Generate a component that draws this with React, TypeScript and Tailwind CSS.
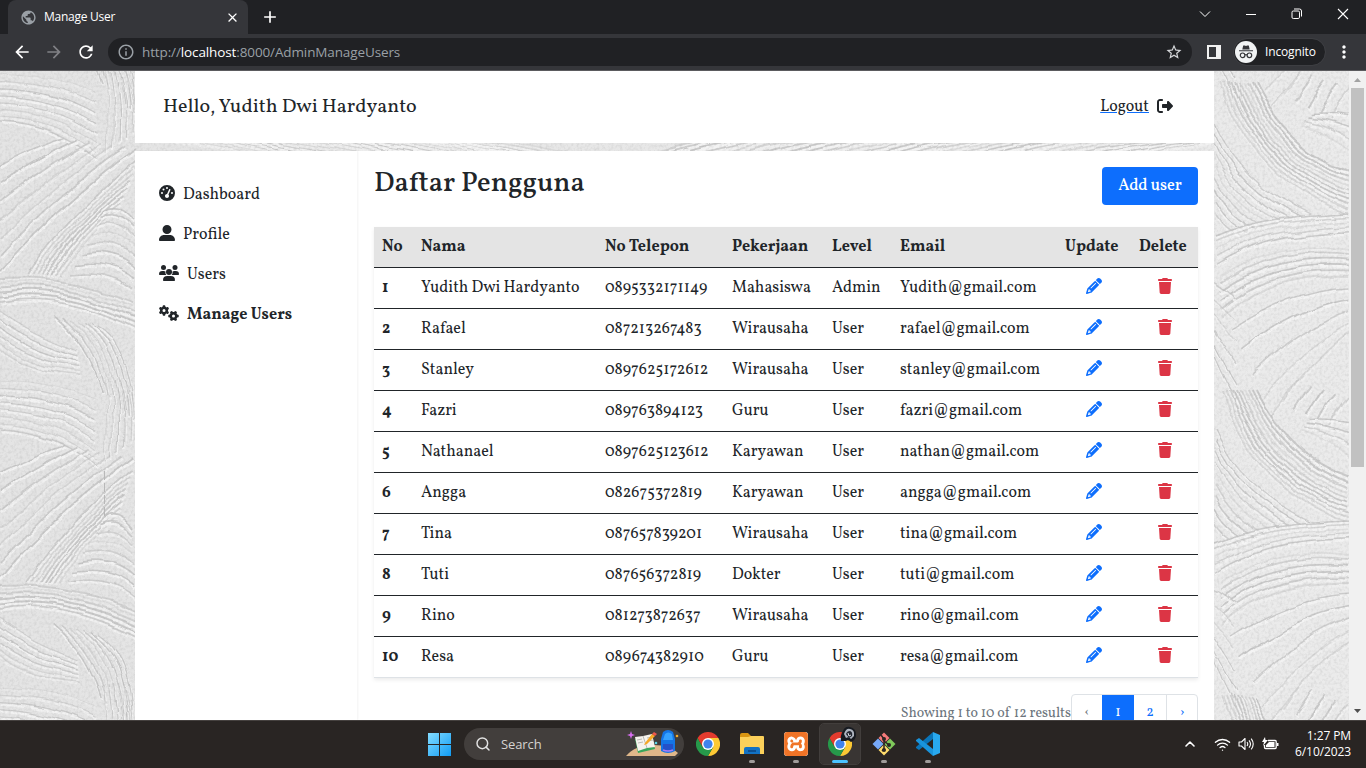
import React from "react";
import { FaGaugeHigh, FaUserLarge, FaGears, FaRightFromBracket, FaPencil, FaTrash } from "react-icons/fa6";
import { SiXampp } from "react-icons/si";
import { MdPublic, MdArrowBack, MdArrowForward, MdRefresh, MdInfoOutline, MdStarBorder, MdClose, MdAdd, MdMoreVert } from "react-icons/md";
import { ChevronUp, Wifi, Search } from "lucide-react";

const serif = "font-['Vollkorn','Liberation_Serif',serif]";
const ui = "font-['Segoe_UI','Open_Sans',sans-serif]";

type Pt = [number, number];
type Fan = { a: [Pt, Pt, Pt]; b: [Pt, Pt, Pt]; n: number };

const fans: Fan[] = [
  { a: [[0, 3], [55, 5], [94, 22]], b: [[0, 50], [55, 52], [98, 88]], n: 8 },
  { a: [[0, 90], [40, 72], [62, 66]], b: [[0, 200], [60, 130], [135, 78]], n: 7 },
  { a: [[25, 205], [60, 150], [135, 88]], b: [[62, 205], [85, 165], [118, 140]], n: 8 },
  { a: [[104, 0], [108, 30], [106, 82]], b: [[126, 0], [137, 30], [134, 60]], n: 5 },
  { a: [[104, 140], [120, 130], [135, 150]], b: [[70, 203], [110, 198], [135, 218]], n: 8 },
  { a: [[0, 209], [70, 205], [135, 232]], b: [[0, 232], [60, 220], [135, 258]], n: 6 },
  { a: [[0, 240], [30, 262], [78, 280]], b: [[0, 278], [20, 300], [80, 304]], n: 6 },
  { a: [[52, 245], [88, 275], [100, 320]], b: [[98, 255], [132, 275], [134, 350]], n: 7 },
  { a: [[1220, 12], [1250, 110], [1349, 146]], b: [[1256, 12], [1290, 80], [1349, 98]], n: 10 },
  { a: [[1214, 50], [1240, 110], [1310, 144]], b: [[1214, 146], [1222, 160], [1236, 166]], n: 9 },
  { a: [[1214, 166], [1260, 146], [1349, 143]], b: [[1214, 196], [1260, 164], [1349, 162]], n: 5 },
  { a: [[1220, 204], [1280, 168], [1349, 178]], b: [[1222, 246], [1270, 202], [1349, 205]], n: 6 },
  { a: [[1232, 258], [1290, 220], [1349, 216]], b: [[1270, 345], [1310, 290], [1349, 262]], n: 5 },
  { a: [[1214, 208], [1222, 212], [1236, 222]], b: [[1214, 285], [1220, 300], [1236, 330]], n: 6 },
  { a: [[1280, 22], [1290, 8], [1296, 0]], b: [[1330, 48], [1340, 28], [1349, 18]], n: 5 },
  { a: [[1310, 42], [1330, 40], [1349, 43]], b: [[1300, 54], [1325, 62], [1349, 80]], n: 4 },
  { a: [[135, 60], [240, 80], [300, 92]], b: [[430, 60], [530, 70], [620, 95]], n: 18 },
  { a: [[620, 90], [670, 70], [760, 60]], b: [[1110, 90], [1150, 76], [1214, 70]], n: 26 },
];

const lines: { d: string; w: number; o: number }[] = [];
[-307, 0, 307, 614].forEach((dy) => {
  fans.forEach((f, fi) => {
    for (let i = 0; i < f.n; i++) {
      const j = Math.sin(i * 12.9 + fi * 7.3) * 0.28;
      const t = Math.min(1, Math.max(0, (i + j) / (f.n - 1)));
      const p = f.a.map((q, k) => [q[0] + (f.b[k][0] - q[0]) * t, q[1] + (f.b[k][1] - q[1]) * t + dy]);
      lines.push({
        d: `M${p[0][0].toFixed(1)} ${p[0][1].toFixed(1)}Q${p[1][0].toFixed(1)} ${p[1][1].toFixed(1)} ${p[2][0].toFixed(1)} ${p[2][1].toFixed(1)}`,
        w: 1 + Math.abs(Math.sin(i * 3.1 + fi)) * 0.9,
        o: 0.3 + Math.abs(Math.sin(i * 5.7 + fi * 2)) * 0.55,
      });
    }
  });
});

function Plaster() {
  return (
    <svg className="absolute inset-0" width="1349" height="649" viewBox="0 0 1349 649">
      <defs>
        <filter id="rough" x="0" y="0" width="1349" height="649" filterUnits="userSpaceOnUse" colorInterpolationFilters="sRGB">
          <feTurbulence type="fractalNoise" baseFrequency="0.02" numOctaves="3" seed="4" result="n" />
          <feDisplacementMap in="SourceGraphic" in2="n" scale="10" xChannelSelector="R" yChannelSelector="G" />
        </filter>
        <filter id="grain" x="0" y="0" width="1349" height="649" filterUnits="userSpaceOnUse" colorInterpolationFilters="sRGB">
          <feTurbulence type="fractalNoise" baseFrequency="0.35" numOctaves="2" seed="9" />
          <feColorMatrix values="0 0 0 0 0.5  0 0 0 0 0.5  0 0 0 0 0.5  0.35 0 0 0 -0.15" />
        </filter>
        <linearGradient id="base" x1="0" x2="1" y1="0" y2="0">
          <stop offset="0" stopColor="#e4e4e4" />
          <stop offset="1" stopColor="#ebebeb" />
        </linearGradient>
      </defs>
      <rect width="1349" height="649" fill="url(#base)" />
      <g filter="url(#rough)" fill="none">
        {lines.map((l, i) => (
          <g key={i} opacity={l.o}>
            <path d={l.d} stroke="#f6f6f6" strokeWidth={l.w + 1.2} transform="translate(0.6 2.2)" />
            <path d={l.d} stroke="#c4c4c4" strokeWidth={l.w} />
          </g>
        ))}
      </g>
      <rect width="1349" height="649" filter="url(#grain)" />
      <path d="M104.5 400v45" stroke="#b8b8b8" strokeDasharray="9 3" />
    </svg>
  );
}

function ChromeLogo() {
  return (
    <svg width="24" height="24" viewBox="0 0 24 24">
      <path d="M12 6h10.4A12 12 0 0 1 12 24l5.2-9Z" fill="#fcc934" />
      <path d="M6.8 15 1.6 6A12 12 0 0 0 12 24l5.2-9Z" fill="#26994a" />
      <path d="M12 6h10.4A12 12 0 0 0 1.6 6l5.2 9Z" fill="#e33b2e" />
      <circle cx="12" cy="12" r="6" fill="#fff" />
      <circle cx="12" cy="12" r="4.6" fill="#3f83ee" />
    </svg>
  );
}

function UsersIcon() {
  return (
    <svg width="20" height="16" viewBox="0 0 20 16" fill="currentColor">
      <circle cx="4.5" cy="2.5" r="2.5" /><circle cx="16" cy="2.5" r="2.5" /><circle cx="10" cy="7" r="3" />
      <path d="M0 9.3Q0 6 3.3 6h1.6q1 0 1.6.4Q6 8.400 7.300 10H.7q-.7 0-.7-.7zM20 9.300Q20 6 16.700 6h-1.600q-1 0-1.600.4.500 2-.8 3.600h6.600q.7 0 .7-.7z" />
      <path d="M4 15.200Q4 11 8.200 11h3.600q4.200 0 4.200 4.200 0 .8-.8.8H4.800q-.8 0-.8-.8z" />
    </svg>
  );
}

function Dot() {
  return <span className="absolute bottom-[-7px] left-[9px] h-[3px] w-[6px] rounded-full bg-[#a09c9a]" />;
}

const people = [
  ["Yudith Dwi Hardyanto", "0895332171149", "Mahasiswa", "Admin", "Yudith@gmail.com"],
  ["Rafael", "087213267483", "Wirausaha", "User", "rafael@gmail.com"],
  ["Stanley", "0897625172612", "Wirausaha", "User", "stanley@gmail.com"],
  ["Fazri", "089763894123", "Guru", "User", "fazri@gmail.com"],
  ["Nathanael", "0897625123612", "Karyawan", "User", "nathan@gmail.com"],
  ["Angga", "082675372819", "Karyawan", "User", "angga@gmail.com"],
  ["Tina", "087657839201", "Wirausaha", "User", "tina@gmail.com"],
  ["Tuti", "087656372819", "Dokter", "User", "tuti@gmail.com"],
  ["Rino", "081273872637", "Wirausaha", "User", "rino@gmail.com"],
  ["Resa", "089674382910", "Guru", "User", "resa@gmail.com"],
];

function Browser() {
  return (
    <header className={`${ui} h-[71px] shrink-0 border-b border-[#5b5b5e] bg-[#35363a] text-white`}>
      <div className="flex h-[34px] bg-[#202124] pl-2">
        <div className="flex h-[34px] w-[240px] items-center rounded-t-lg bg-[#35363a] pl-3 pr-2">
          <MdPublic className="size-[17px] text-[#9aa0a6]" />
          <span className="ml-[7px] flex-1 text-[12px] tracking-[-0.25px]">Manage User</span>
          <MdClose className="size-[15px]" />
        </div>
        <MdAdd className="ml-[12px] mt-[7px] size-5" />
        <div className="ml-auto flex items-start pt-[8px]">
          <svg width="12" height="12" viewBox="0 0 12 12" className="mr-[35px]" fill="none" stroke="#fff"><path d="m1 3.5 5 5 5-5" /></svg>
          <svg width="11" height="13" viewBox="0 0 11 13" className="mr-[34px]"><path d="M0 6.5h10" stroke="#fff" /></svg>
          <svg width="12" height="12" viewBox="0 0 12 12" className="mr-[34px]" fill="none" stroke="#fff">
            <rect x="1" y="3" width="7.5" height="7.5" rx="1.3" /><path d="M3 1h5.5a2 2 0 0 1 2 2v5.5" />
          </svg>
          <svg width="12" height="12" viewBox="0 0 12 12" className="mr-[17px]" stroke="#fff" strokeWidth="1.1"><path d="m1 1 10 10M11 1 1 11" /></svg>
        </div>
      </div>
      <div className="flex h-9 items-center pl-[12px]">
        <MdArrowBack className="size-5" />
        <MdArrowForward className="ml-[12px] size-5 text-[#808185]" />
        <MdRefresh className="ml-[12px] size-5" />
        <div className="ml-[12px] flex h-7 w-[1084px] items-center rounded-full bg-[#202124] pl-[9px] pr-[9px]">
          <MdInfoOutline className="size-[18px] text-[#9aa0a6]" />
          <span className="ml-[7px] flex-1 text-[13.5px] tracking-[-0.12px] text-[#9aa0a6]">http://<span className="text-white">localhost</span>:8000/AdminManageUsers</span>
          <MdStarBorder className="size-[18px] text-[#d5d7da]" />
        </div>
        <svg width="14" height="14" viewBox="0 0 14 14" className="ml-[15px]"><path fillRule="evenodd" fill="#f1f1f1" d="M0 0h14v14H0zM2 2v10h7V2z" /></svg>
        <div className="ml-[13px] flex h-[26px] w-[91px] items-center rounded-full bg-[#202124] pl-[1px] outline outline-1 outline-[#3d3e42]">
          <svg width="22" height="22" viewBox="0 0 22 22">
            <circle cx="11" cy="11" r="11" fill="#f1f3f4" />
            <path d="M7.3 8.5 8.2 4.5h1.6l1.2.5 1.2-.5h1.6l.9 4zM4 9.3h14v1H4z" fill="#35363a" />
            <g fill="none" stroke="#35363a" strokeWidth="1.2"><circle cx="7.6" cy="14.3" r="2.3" /><circle cx="14.4" cy="14.3" r="2.3" /><path d="M9.9 14q1.1-.8 2.2 0" /></g>
          </svg>
          <span className="ml-2 text-[12px] tracking-[-0.15px]">Incognito</span>
        </div>
        <MdMoreVert className="ml-[9px] size-5" />
      </div>
    </header>
  );
}

const menu = [
  { icon: <FaGaugeHigh className="size-4" />, label: "Dashboard", cls: "" },
  { icon: <FaUserLarge className="size-4" />, label: "Profile", cls: "" },
  { icon: <UsersIcon />, label: "Users", cls: "" },
  { icon: <FaGears className="h-4 w-5" />, label: "Manage Users", cls: "font-bold" },
];

function Page() {
  return (
    <div className={`${serif} relative flex h-[649px] overflow-hidden text-[16px] text-[#212529]`}>
      <Plaster />
      <div className="relative ml-[135px] flex w-[1079px] flex-col">
        <div className="flex h-[72px] shrink-0 items-center bg-white pl-[28px] pr-[41px]">
          <h1 className="flex-1 text-[20px]">Hello, Yudith Dwi Hardyanto</h1>
          <a className="underline decoration-[#0d6efd]">Logout</a>
          <FaRightFromBracket className="mb-[2px] ml-2 size-4" />
        </div>
        <div className="mt-2 flex h-[569px] bg-white">
          <nav className="flex w-[222px] flex-col pl-6 pt-[22px] shadow-[1px_0_2px_rgba(0,0,0,0.05)]">
            {menu.map((m) => (
              <div key={m.label} className="flex h-10 items-center gap-2">
                {m.icon}
                <span className={`pt-1 ${m.cls}`}>{m.label}</span>
              </div>
            ))}
          </nav>
          <main className="w-[857px] pl-[17px] pr-4">
            <div className="flex h-[76px] justify-between pt-4">
              <h2 className="text-[28px] font-medium leading-[34px]">Daftar Pengguna</h2>
              <button className="h-[38px] w-[96px] rounded bg-[#0d6efd] font-medium text-white">Add user</button>
            </div>
            <table className="w-[824px] table-fixed border-separate border-spacing-0 text-left shadow-[0_2px_4px_rgba(0,0,0,0.08)]">
              <colgroup>
                <col className="w-[39px]" /><col className="w-[184px]" /><col className="w-[127px]" /><col className="w-[100px]" />
                <col className="w-[68px]" /><col className="w-[165px]" /><col className="w-[74px]" /><col className="w-[67px]" />
              </colgroup>
              <thead>
                <tr className="h-[41px] bg-[#e4e4e4]">
                  {["No", "Nama", "No Telepon", "Pekerjaan", "Level", "Email", "Update", "Delete"].map((h) => (
                    <th key={h} className="whitespace-nowrap border-b border-[#212529] p-0 pl-2 font-bold leading-6">{h}</th>
                  ))}
                </tr>
              </thead>
              <tbody>
                {people.map((p, i) => (
                  <tr key={p[4]} className="h-[41px] *:border-b *:border-[#212529] last:*:border-[#dee2e6]">
                    <th className="p-0 pl-2 leading-6">{i + 1}</th>
                    <td className="whitespace-nowrap p-0 pl-2">{p[0]}</td>
                    <td className="whitespace-nowrap p-0 pl-2">{p[1]}</td>
                    <td className="whitespace-nowrap p-0 pl-2">{p[2]}</td>
                    <td className="whitespace-nowrap p-0 pl-2">{p[3]}</td>
                    <td className="whitespace-nowrap p-0 pl-2">{p[4]}</td>
                    <td className="p-0 pb-1 text-[#0d6efd]"><FaPencil className="mx-auto size-4" /></td>
                    <td className="p-0 pb-1 text-[#dc3545]"><FaTrash className="mx-auto size-4" /></td>
                  </tr>
                ))}
              </tbody>
            </table>
            <div className="mt-4 flex h-[38px] items-center justify-end text-[14px]">
              <span className="whitespace-nowrap text-[#6c757d]">Showing 1 to 10 of 12 results</span>
              <div className="flex h-[38px] w-[127px] overflow-hidden rounded border border-[#dee2e6] text-center leading-[36px] text-[#0d6efd]">
                <span className="w-[30px] text-[#6c757d]">‹</span>
                <span className="-mt-px h-[38px] w-8 bg-[#0d6efd] pt-px text-white">1</span>
                <span className="w-[33px] border-r border-[#dee2e6]">2</span>
                <span className="flex-1">›</span>
              </div>
            </div>
          </main>
        </div>
      </div>
      <div className="relative ml-auto flex w-[17px] flex-col items-center bg-[#f1f1f1]">
        <svg width="17" height="17" viewBox="0 0 17 17"><path d="m5 11 3.5-4 3.5 4z" fill="#a3a3a3" /></svg>
        <div className="h-[379px] w-[13px] bg-[#c1c1c1]" />
        <svg width="17" height="17" viewBox="0 0 17 17" className="mt-auto"><path d="m5 6 3.5 4L12 6z" fill="#505050" /></svg>
      </div>
    </div>
  );
}

function Taskbar() {
  return (
    <footer className={`${ui} flex h-12 items-center border-t border-[#45413f] bg-[#292523] pb-px pl-[428px] text-white`}>
      <svg width="23" height="23" viewBox="0 0 23 23">
        <defs><linearGradient id="win" x1="0" y1="0" x2="1" y2="1"><stop stopColor="#83dcff" /><stop offset="1" stopColor="#109cf4" /></linearGradient></defs>
        <path d="M0 0h11v11H0zM12 0h11v11H12zM0 12h11v11H0zM12 12h11v11H12z" fill="url(#win)" />
      </svg>
      <div className="ml-[13px] flex h-8 w-[220px] items-center rounded-full bg-[#423e3c] pl-[11px]">
        <Search className="size-4 text-[#e2e2e2]" strokeWidth={2.2} />
        <span className="ml-[10px] flex-1 pt-px text-[13px] tracking-[-0.1px] text-[#d6d3d1]">Search</span>
        <svg width="54" height="28" viewBox="0 0 54 28" className="mr-[4px]">
          <path d="M0 26q9-11 28-11 15 0 24 8l-3 3z" fill="#dfb78a" />
          <path d="m9 9 17-3 3 13-17 4z" fill="#39a75b" />
          <path d="m9 7 8-1 9-2 3 13-8 1-9 3z" fill="#f6f3ee" />
          <path d="m17 6 4 12M11 10l5-1m-4 4 5-1m4-4 5-1m-4 4 5-1" stroke="#b4b4b0" strokeWidth=".9" />
          <path d="m19 13 7-9 3 2-8 8-3 1z" fill="#f6a928" /><path d="m26 4 2-2 3 2-2 2z" fill="#ee574c" />
          <path d="M37 2q5-4 10 0l2 7v12q-7 4-14 0V9z" fill="#1475e6" />
          <path d="M39 4q3-3 7 0l1 6H37z" fill="#35a1ff" /><path d="M37 14h10v7H37z" fill="#2451c8" />
          <path d="M37 20q5 2 10 0" stroke="#a97cf4" strokeWidth="1.5" fill="none" />
          <path d="m5 1 1 3 3 1-3 1-1 3-1-3-3-1 3-1z" fill="#d86df0" />
          <circle cx="51" cy="6" r="1.3" fill="#f5ac29" /><circle cx="30" cy="13" r="1.3" fill="#5dd5e5" />
        </svg>
      </div>
      <div className="ml-[12px] size-6"><ChromeLogo /></div>
      <div className="relative ml-5 size-6">
        <svg width="24" height="24" viewBox="0 0 24 24">
          <path d="M0 3q0-2 2-2h6l3 3v4H0z" fill="#d89512" /><path d="M0 5h8l3-1h12q1 0 1 1v17H0z" fill="#fbd05a" />
          <path d="M4 22v-5q0-2 2-2h12q2 0 2 2v5z" fill="#1272c4" /><path d="M8 18h8v2H8z" fill="#0c4f91" />
        </svg>
        <Dot />
      </div>
      <div className="relative ml-5 size-6">
        <div className="size-6 overflow-hidden rounded-[3px] bg-white"><SiXampp className="size-6 text-[#f07427]" /></div>
        <Dot />
      </div>
      <div className="ml-[12px] flex h-10 w-[40px] items-center justify-center rounded bg-[#393533] outline outline-1 outline-[#423e3c]">
        <div className="relative size-6">
          <ChromeLogo />
          <svg width="17" height="17" viewBox="0 0 17 17" className="absolute left-[12px] top-[-6px]">
            <path d="M1 15Q0 9 3 5q2-5 7-4 6 1 6 8 0 5-5 7-3-3-5-1z" fill="#171a20" />
            <path d="M4 8q2-6 6-5 5 1 4 7l-3 3q-2-3-5-1z" fill="#aeb5c0" /><path d="M6 8q1-3 4-3 3 1 2 5l-3 2z" fill="#222630" />
            <path d="m8 7 1 3 2-1" stroke="#d9dde4" fill="none" />
          </svg>
          <span className="absolute bottom-[-7px] left-[4px] h-[3px] w-4 rounded-full bg-[#4cc2ff]" />
        </div>
      </div>
      <div className="relative ml-[12px] size-6">
        <svg width="24" height="24" viewBox="0 0 24 24">
          <path d="m12 .5 5.500 5.500-5.500 5.500L6.500 6z" fill="#f47a7a" /><path d="m18 6.500 5.500 5.500-5.500 5.500-5.500-5.500z" fill="#7fc95b" />
          <path d="m12 12.500 5.500 5.500-5.500 5.500L6.500 18z" fill="#ffdc6b" /><path d="m6 6.500 5.500 5.500L6 17.500.500 12z" fill="#77a9f8" />
          <path d="M9 3l3 4v12M12 9l5 4M12 17l-2 2" stroke="#2b2523" strokeWidth="1.5" fill="none" />
          <circle cx="12" cy="7" r="2" fill="#2b2523" /><circle cx="17" cy="13" r="2" fill="#2b2523" /><circle cx="12" cy="18" r="2" fill="#2b2523" />
        </svg>
        <Dot />
      </div>
      <div className="relative ml-5 size-6">
        <svg width="24" height="24" viewBox="0 0 24 24">
          <path d="M17 0v7L3 18l-3-2v-1z" fill="#0a75b9" /><path d="M17 24v-7L3 6 0 8v1z" fill="#1994dc" />
          <path d="m17 0 7 3v18l-7 3z" fill="#28a9ef" />
        </svg>
        <Dot />
      </div>
      <div className="ml-auto flex items-center">
        <ChevronUp className="size-[16px]" strokeWidth={2.4} />
        <Wifi className="ml-[16px] size-[17px]" strokeWidth={1.9} />
        <svg width="17" height="14" viewBox="0 0 17 14" className="ml-[7px]" fill="none" stroke="#fff" strokeWidth="1.1" strokeLinejoin="round">
          <path d="M1 5h2.5L7 1.5v11L3.500 9H1zM9 5q1.500 2 0 4M11 3.300q3 3.700 0 7.400M13.200 1.600q4 5.400 0 10.800" />
        </svg>
        <svg width="17" height="14" viewBox="0 0 17 14" className="ml-[7px]">
          <path d="M6 3.500h7.200q1 0 1 1v6q0 1-1 1H3.500q-1 0-1-1V8" fill="none" stroke="#fff" strokeWidth="1.3" />
          <path d="M7 5h5.500v5H4V8zM15 6h1.500v3H15zM3 0 0 5h2L1 9l5-6H3.500z" fill="#fff" />
        </svg>
        <div className="ml-[9px] mr-[15px] w-[63px] text-right text-[12px] leading-4 tracking-[-0.1px]"><div>1:27 PM</div><div>6/10/2023</div></div>
      </div>
    </footer>
  );
}

export default function App() {
  return (
    <div className="flex h-[768px] w-[1366px] flex-col overflow-hidden bg-white">
      <Browser />
      <Page />
      <Taskbar />
    </div>
  );
}
